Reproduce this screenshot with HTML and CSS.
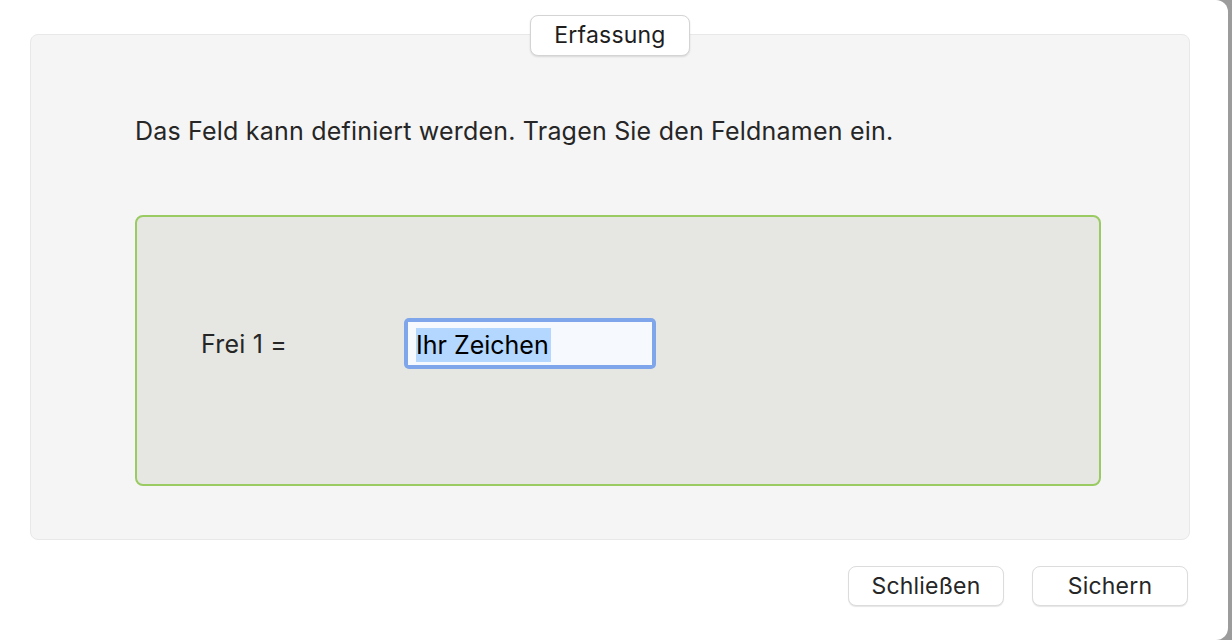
FILE: index.html
```html
<!DOCTYPE html>
<html lang="de">
<head>
    <meta charset="UTF-8">
    <title>Erfassung</title>
    <link rel="stylesheet" href="styles.css">
</head>
<body>

<div class="window">
    <div class="group">
        <div class="tab">Erfassung</div>
        <p class="hint">Das Feld kann definiert werden. Tragen Sie den Feldnamen ein.</p>
        <div class="field-box">
            <label class="field-label" for="frei1">Frei 1 =</label>
            <div class="input-ring">
                <div class="input" id="frei1"><span class="sel">Ihr Zeichen</span></div>
            </div>
        </div>
    </div>
    <div class="actions">
        <button class="btn" type="button">Schließen</button>
        <button class="btn" type="button">Sichern</button>
    </div>
</div>

</body>
</html>
```

FILE: styles.css
```css
* {
    padding: 0;
    margin: 0;
    box-sizing: border-box;
}
html, body {
    height: 100%;
}
body {
    background: #9c9c9c;
    font-family: Inter, "Liberation Sans", sans-serif;
    color: #262626;
    overflow: hidden;
}
/* dialog sheet, cut at the left, rounded on the right */
.window {
    width: 1228px;
    height: 640px;
    background: #fff;
    border-radius: 0 12px 12px 0;
    padding: 34px 38px 0 30px;
}
.group {
    position: relative;
    height: 506px;
    background: #f5f5f5;
    border: 1px solid #e8e8e8;
    border-radius: 8px;
    padding: 81px 0 0 104px;
}
.tab {/*segment label sitting on the top border*/
    position: absolute;
    top: -20px;
    left: 50%;
    transform: translateX(-50%);
    width: 160px;
    height: 41px;
    line-height: 38px;
    text-align: center;
    font-size: 23px;
    letter-spacing: 0.2px;
    color: #1e1e1e;
    background: #fff;
    border: 1px solid #d4d4d4;
    border-radius: 8px;
    box-shadow: 0 1px 2px rgba(0,0,0,.12);
}
.hint {
    font-size: 25px;
    line-height: 30px;
    letter-spacing: 0.2px;
}
.field-box {
    display: flex;
    align-items: center;
    width: 966px;
    height: 271px;
    margin-top: 69px;
    padding: 0 0 14px 64px;
    background: #e6e7e3;
    border: 2px solid #9aca62;
    border-radius: 8px;
}
.field-label {
    width: 203px;
    font-size: 25px;
    letter-spacing: 0.2px;
}
.input-ring {
    width: 252px;
    height: 51px;
    padding: 4px;
    background: #7fa6ea;
    border-radius: 5px;
}
.input {
    height: 100%;
    background: #f6f9fd;
    padding: 6px 0 0 8px;
    font-size: 25px;
    color: #000;
}
.sel {
    display: inline-block;
    line-height: 34px;
    padding-right: 2px;
    background: #b3d7ff;
}
.actions {
    display: flex;
    justify-content: flex-end;
    gap: 28px;
    padding: 26px 2px 0 0;
}
.btn {
    width: 156px;
    height: 40px;
    font-family: inherit;
    font-size: 23px;
    letter-spacing: 0.2px;
    color: #262626;
    background: #fff;
    border: 1px solid #dcdcdc;
    border-radius: 8px;
    box-shadow: 0 1px 1px rgba(0,0,0,.1);
}
```
